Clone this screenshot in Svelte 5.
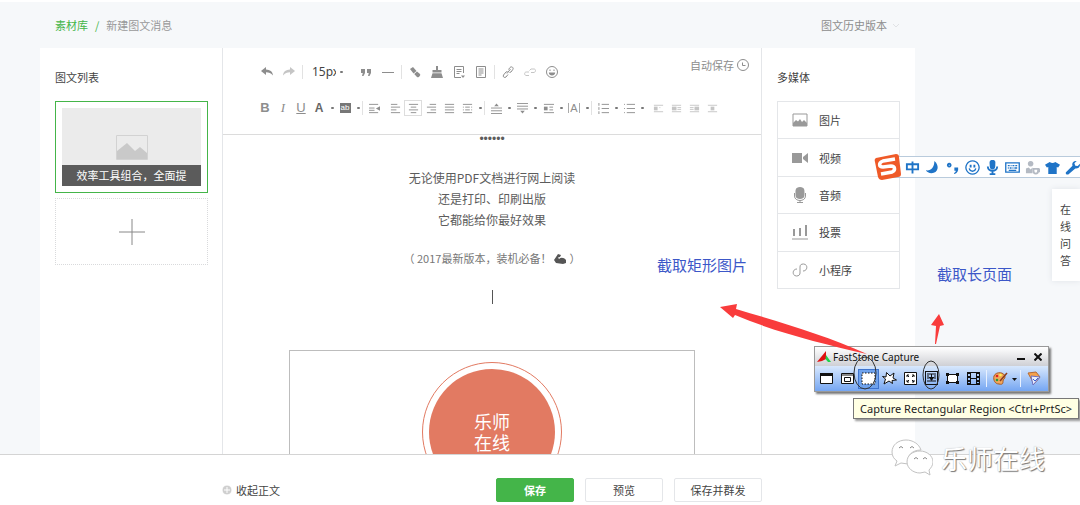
<script lang="ts">
	type Icon = { s?: string; f?: string; faint?: boolean };

	const icons: Record<string, Icon> = {
		undo: { f: 'M0 5 5 1v2.6c4 .2 6.5 2 7 5.900C10 7.200 8 6.300 5 6.300V9z' },
		redo: { f: 'M12 5 7 1v2.600C3 3.800.5 5.600 0 9.500c2-2.300 4-3.200 7-3.200V9z', faint: true },
		quote: { f: 'M1 3h4v4L3.500 10H2l.8-3H1zM7 3h4v4l-1.500 3H8l.8-3H7z' },
		rule: { s: 'M0 6.500h12' },
		eraser: { f: 'M1 3 4 1l3.500 4-3 2.500zM5.200 8 8 5.600l3 2.400c1 1.500-1.500 4-3 3z' },
		brush: { f: 'M5 0h2v4h3.500v2.500h-9V4H5zM1.500 7.300h9L12 12H0z' },
		template: { s: 'M10.500 7V.5h-9v11H8M3.500 3.500h5M3.500 5.500h5M3.500 7.500h3', f: 'M8 9.500h4L10 12z' },
		page: { s: 'M1.500.5h9v11h-9zM3.500 3h5M3.500 5h5M3.500 7h5M3.500 9h3' },
		link: { s: 'M5 7.500 8.500 3M6.500 3.500 8 1.500c1.600-1.600 4 .2 2.800 2L9 6 7.500 6.500M5.500 5.500 4 6 1.500 9c-1 1.700 1 3.300 2.500 2L6 8.500' },
		unlink: { s: 'M5 9.500H2c-2-.5-1.800-3.500.3-3.500H5M7 6.500h3c2-.5 2-3.500 0-3.500H7L5.500 4.500', faint: true },
		smile: { s: 'M6 .5a5.500 5.500 0 1 0 0 11 5.500 5.500 0 1 0 0-11', f: 'M3.500 3.500h1v1.500h-1zM7.500 3.500h1v1.500h-1zM2.800 6.500h6.400c0 4-6.400 4-6.400 0z' },
		indent: { s: 'M0 1.500h10M0 5.500h6M0 10.500h10M0 8h6', f: 'M12 3.500v5L7.500 6z' },
		left: { s: 'M1 1.500h7M1 4.500h10M1 7.500h6M1 10.500h10' },
		center: { s: 'M1 1.500h10M3 4.500h6M1 7.500h10M3 10.500h6' },
		right: { s: 'M4 1.500h7M1 4.500h10M5 7.500h6M1 10.500h10' },
		justify: { s: 'M1 1.500h10M1 4.500h10M1 7.500h10M1 10.500h10' },
		margins: { s: 'M1 1.500h10M3.500 4.500h5M3.500 7.500h5M1 10.500h10M1.500 4v1M1.500 7v1M10.500 4v1M10.500 7v1' },
		spaceTop: { s: 'M0 5.500h12M0 8.500h12M0 11.500h12', f: 'M3.500 3.500 6 .5l2.500 3z' },
		spaceBottom: { s: 'M0 .5h12M0 3.500h12M0 6.500h12', f: 'M3.500 8.500 6 11.500l2.500-3z' },
		lineHeight: { s: 'M1 1.500h11M7 4.500h4M7 7.500h4M1 10.500h11', f: 'M1 4h4v4H1z' },
		ordered: { s: 'M4 1.500h8M4 6h8M4 10.500h8M1 0v3M1 4.500v3M1 9v3' },
		bullets: { s: 'M3 1.500h9M3 6h9M3 10.500h9M0 1.500h1M0 6h1M0 10.500h1' },
		imgNone: { s: 'M1 2.500h10M7 5h1M1 9.500h10', f: 'M1 4h4v4H1z', faint: true },
		imgLeft: { s: 'M1 2.500h10M7 5h4M7 7h4M1 9.500h10', f: 'M1 4h5v4H1z', faint: true },
		imgRight: { s: 'M1 2.500h10M1 5h4M1 7h4M1 9.500h10', f: 'M6 4h5v4H6z', faint: true },
		imgCenter: { s: 'M1 2.500h10M1 9.500h10', f: 'M4 4h4v4H4z', faint: true },
		clock: { s: 'M6 .5a5.500 5.500 0 1 0 0 11 5.500 5.500 0 1 0 0-11M5.500 3.500V6.500h3' }
	};

	const topTools = ['undo', 'redo', '|', 'size', 'quote', 'rule', '|', 'eraser', 'brush', 'template', 'page', '|', 'link', 'unlink', 'smile'];
	const bottomTools = [
		'B', 'I', 'U', 'A', 'v', 'ab', 'v', '|', 'indent', ' ', 'left', 'center', 'right', 'justify', 'margins', 'v', '|',
		'spaceTop', 'v', 'spaceBottom', 'v', 'lineHeight', 'v', '[A]', 'v', '|', 'ordered', 'v', 'bullets', 'v', ' ',
		'imgNone', 'imgLeft', 'imgRight', 'imgCenter'
	];

	const media: { name: string; s?: string; f: string }[] = [
		{ name: '图片', s: 'M1 2h14v12H1z', f: 'M1 14V11l3-3 2 1.500L8 7l2 3 2-2 3 3v3z' },
		{ name: '视频', f: 'M0 3h10v10H0zM11 7l5-4v10l-5-4z' },
		{ name: '音频', s: 'M2.500 6v3c0 6 11 6 11 0V6M8 13.500V16M5 15.500h6', f: 'M8 0c5 0 4.500 4 4.500 6S13 12 8 12 3.500 8 3.500 6 3 0 8 0z' },
		{ name: '投票', s: 'M0 15h16', f: 'M1 5h2v7H1zM7 4h2v8H7zM13 1h2v11h-2z' },
		{ name: '小程序', s: 'M5 7C0 7 0 14 4.500 14 7 14 8 12.500 8 11V5c0-2 1-3 3.500-3 4.500 0 4.500 7-.5 7', f: '' }
	];

	const ime: { label: string; s?: string; f?: string; dim?: boolean }[] = [
		{ label: '中文', s: 'M2 4.500h12v5.500H2zM8 1.500v13' },
		{ label: '半角', f: 'M10 1c6 5 4 13-3 13-3 0-5-1-6-3 5 1 9-3 9-10z' },
		{ label: '标点', s: 'M4.500 4a1.500 1.500 0 1 0 .01 0', f: 'M10 8h4c.5 4-1 6-4 7l-.5-1c1.500-.8 2-1.500 2-2.500H10z' },
		{ label: '表情', s: 'M8 1a7 7 0 1 0 .01 0M4.500 9c1 4 6 4 7 0', f: 'M5 5h2v3H5zM9 5h2v3H9z' },
		{ label: '语音', s: 'M3 7c0 6 10 6 10 0M8 11v4', f: 'M8 0c4 0 3 3 3 5s0 5-3 5-3-3-3-5-1-5 3-5zM5 14h6v2H5z' },
		{ label: '键盘', s: 'M.8 3h14.400v10H.8zM3 6h2M6 6h1M8 6h2M11 6h2M3 8.500h1M5 8.500h2M8 8.500h1M10 8.500h3M4 11h8' },
		{ label: '账户', s: 'M9 9.500h5v2c0 4-5 4-5 0zM14 10h1.500v2H14', f: 'M6 1a3 3 0 1 1-.01 0zM1 9l3-1 2 2 2-2v6H1z', dim: true },
		{ label: '皮肤', f: 'M5 2c2 1.500 4 1.500 6 0l5 3-2 3-1.500-.5V15h-9V7.500L2 8 0 5z' },
		{ label: '工具', f: 'M1 13 8 6c-1-3 1-5.500 4.500-5L10 3.500 11 6l2.500.5L16 4c.5 3-2 5.500-5 5l-7.500 6.500C1.500 16 .3 14.500 1 13z' }
	];

	const shots: { label: string; s: string; f?: string; on?: boolean }[] = [
		{ label: 'Capture Active Window', s: 'M1.500 2.500h12v10h-12z', f: 'M1 2h13v3H1z' },
		{ label: 'Capture Window/Object', s: 'M1.500 2.500h12v10h-12zM1.500 4h12M4.500 6.500h6v4h-6z' },
		{ label: 'Capture Rectangular Region', s: '', on: true },
		{ label: 'Capture Freehand Region', s: 'M4.500 1.500 8 5l4-3-1 5 3.500 2-4.500.5.5 3L7 10l-5 3 1.500-5L.500 5.500 4 6z' },
		{ label: 'Capture Full Screen', s: 'M1.500 1.500h12v12h-12zM4 4l2 2M11 4 9 6M4 11l2-2M11 11 9 9M6 4H4v2M9 4h2v2M6 11H4V9M9 11h2V9' },
		{ label: 'Capture Scrolling Window', s: 'M1.500 1v12M13.500 1v12M1 .5h13M3 3h9M3 5h2M10 5h2M3 7h2M10 7h2M3 10h9M1 13.500h13M7.500 3v5', f: 'M4.500 6h6l-3 4z' },
		{ label: 'Capture Fixed-Size Region', s: 'M2.500 3.500h10v8h-10z', f: 'M1 2h3v3H1zM11 2h3v3h-3zM1 10h3v3H1zM11 10h3v3h-3z' },
		{ label: 'Screen Recorder', s: 'M4.500 1v13M10.500 1v13M4 7.500h7', f: 'M1 1h3v2H2v2h2v2H2v2h2v2H2v1h2v2H1zM14 1h-3v2h2v2h-2v2h2v2h-2v2h2v1h-2v2h3zM4 2h7V1H4zM4 14h7v-1H4z' }
	];
</script>

{#snippet glyph(name: string)}
	<svg class="glyph" class:faint={icons[name].faint} viewBox="0 0 12 12" aria-hidden="true">
		{#if icons[name].s}<path class="line" d={icons[name].s} />{/if}
		{#if icons[name].f}<path class="solid" d={icons[name].f} />{/if}
	</svg>
{/snippet}

<div class="page">
	<div class="workspace">
		<header>
			<nav><a href="#library">素材库</a><span class="slash">/</span><span>新建图文消息</span></nav>
			<button class="history">图文历史版本 <svg viewBox="0 0 8 8" aria-hidden="true"><path d="M1 3l3 3 3-3" /></svg></button>
		</header>

		<div class="columns">
			<aside class="articles">
				<h2>图文列表</h2>
				<button class="cover">
					<span class="thumb">
						<svg viewBox="0 0 32 25" aria-hidden="true">
							<path d="M.5.5h31v24H.5z" fill="none" stroke="#d2d2d2" />
							<path d="M1 24v-8L11 8l8 8 5-4 7 6v6z" fill="#c9c9c9" />
						</svg>
					</span>
					<span class="caption">效率工具组合，全面提</span>
				</button>
				<button class="add" aria-label="添加图文">
					<svg viewBox="0 0 26 26" aria-hidden="true"><path d="M13 0v26M0 13h26" /></svg>
				</button>
			</aside>

			<main>
				<div class="toolbar">
					<div class="tools">
						{#each topTools as t}
							{#if t === '|'}
								<i class="sep wide"></i>
							{:else if t === 'size'}
								<span class="size">
									<select aria-label="字号"><option>15px</option></select>
									<i class="dot"></i>
								</span>
							{:else}
								<button class="tool wide" aria-label={t}>{@render glyph(t)}</button>
							{/if}
						{/each}
					</div>
					<div class="tools second">
						{#each bottomTools as t}
							{#if t === '|'}
								<i class="sep"></i>
							{:else if t === ' '}
								<i class="gap"></i>
							{:else if t === 'v'}
								<button class="more" aria-label="更多"><i class="dot"></i></button>
							{:else if icons[t]}
								<button class="tool" class:active={t === 'center'} aria-label={t}>{@render glyph(t)}</button>
							{:else if t === 'ab'}
								<button class="tool"><span class="ab">ab</span></button>
							{:else if t === '[A]'}
								<button class="tool"><span class="spacing">A</span></button>
							{:else}
								<button class="tool letter {t}">{t}</button>
							{/if}
						{/each}
					</div>
					<span class="autosave">自动保存 {@render glyph('clock')}</span>
				</div>

				<article>
					<p class="dots">••••••</p>
					<p>无论使用PDF文档进行网上阅读</p>
					<p>还是打印、印刷出版</p>
					<p>它都能给你最好效果</p>
					<p class="note">
						（ 2017最新版本，装机必备！<svg viewBox="0 0 12 10" aria-hidden="true"><path d="M0 6 4 0l3 1-1 2-2 .5 1 1.500c2-2 5-1.500 7 1v3L9 10 2 9z" /></svg> ）
					</p>
					<div class="cursor"></div>
					<div class="frame">
						<div class="ring"><div class="disc"><span>乐师</span><span>在线</span></div></div>
					</div>
				</article>
			</main>

			<aside class="media">
				<h2>多媒体</h2>
				<ul>
					{#each media as m}
						<li>
							<button>
								<svg viewBox="0 0 16 16" aria-hidden="true">
									{#if m.s}<path class="line" d={m.s} />{/if}
									<path class="solid" d={m.f} />
								</svg>
								{m.name}
							</button>
						</li>
					{/each}
				</ul>
			</aside>
		</div>
	</div>

	<footer>
		<button class="fold">
			<svg viewBox="0 0 10 10" aria-hidden="true"><circle cx="5" cy="5" r="5" /><path d="M5 2v6M2 5h6" /></svg>
			收起正文
		</button>
		<div class="actions">
			<button class="primary">保存</button>
			<button>预览</button>
			<button class="long">保存并群发</button>
		</div>
	</footer>

	<div class="ime">
		<svg class="sogou" viewBox="0 0 28 28" aria-label="S">
			<path d="M2 5 22 1q3 0 3 3l2 17q0 3-3 3L8 27q-3 0-4-3L1 9q-1-3 1-4z" fill="#ef5a28" />
			<path d="M21 6 9 8c-5 2-4 6 0 6l8-1c4 0 5 4 1 6L7 21" fill="none" stroke="#fff" stroke-width="3.500" />
		</svg>
		{#each ime as k}
			<button class:dim={k.dim} aria-label={k.label}>
				<svg viewBox="0 0 16 16" aria-hidden="true">
					{#if k.s}<path class="line" d={k.s} />{/if}
					{#if k.f}<path class="solid" d={k.f} />{/if}
				</svg>
			</button>
		{/each}
	</div>

	<a class="ask" href="#ask">在线问答</a>

	<span class="remark rect">截取矩形图片</span>
	<span class="remark scroll">截取长页面</span>

	<section class="capture">
		<div class="titlebar">
			<svg viewBox="0 0 14 12" aria-hidden="true"><path d="M0 11 9 0v8L5 10z" fill="#e01010" /><path d="M9 4l5 7h-3L8.500 8z" fill="#1fd04a" /></svg>
			<span>FastStone Capture</span>
			<button aria-label="Minimize"><svg viewBox="0 0 8 8"><path d="M0 6h8" /></svg></button>
			<button aria-label="Close"><svg viewBox="0 0 8 8"><path d="M.5.5l7 7M7.500.5l-7 7" /></svg></button>
		</div>
		<div class="shots">
			{#each shots as c}
				<button class:on={c.on} aria-label={c.label}>
					<svg viewBox="0 0 15 15" aria-hidden="true">
						{#if c.on}
							<rect x="1" y="2" width="13" height="11" fill="#fff" stroke="#111" stroke-dasharray="1.500 1.500" />
						{:else}
							<path class="line" d={c.s} />
							{#if c.f}<path class="solid" d={c.f} />{/if}
						{/if}
					</svg>
				</button>
			{/each}
			<i></i>
			<button aria-label="Open in Editor">
				<svg viewBox="0 0 15 15" aria-hidden="true">
					<path d="M1 5c2-5 11-4 11 1 0 2-2 2-2 4s0 4-4 3C2 13 0 9 1 5z" fill="#f2a75c" stroke="#a75a22" />
					<circle cx="4" cy="5" r="1.300" fill="#d22" /><circle cx="7.500" cy="4" r="1.300" fill="#fff04c" /><circle cx="4" cy="9" r="1.300" fill="#2a9c3a" />
					<path d="M14 2 7 10" stroke="#8a3c1c" stroke-width="1.500" />
				</svg>
			</button>
			<button class="drop" aria-label="Output"><svg viewBox="0 0 6 6"><path class="solid" d="M0 2h5L2.500 5z" /></svg></button>
			<i></i>
			<button aria-label="Settings">
				<svg viewBox="0 0 15 15" aria-hidden="true">
					<path d="M1 2 9 1l4 5-6 7z" fill="#f5a14c" stroke="#b56b35" />
					<path d="M4 5l9 1-7 8z" fill="#e9efff" stroke="#6c6fc0" /><path d="M6 8l2 2 3-3" fill="none" stroke="#3d62cf" />
				</svg>
			</button>
		</div>
	</section>
	<div class="tooltip" role="tooltip">Capture Rectangular Region &lt;Ctrl+PrtSc&gt;</div>

	<svg class="marks" viewBox="0 0 360 110" aria-hidden="true">
		<path d="M0 16 17 13 16 18C60 31 105 44 147 63 100 52 55 41 15 24L13 27z" fill="#f93c3c" />
		<path d="M219 23l5 11-4 1-4 18h-1l1-18-5-1z" fill="#f93c3c" />
		<ellipse cx="145" cy="82" rx="11" ry="16" /><ellipse cx="211" cy="84" rx="8" ry="14" />
	</svg>

	<div class="watermark">
		<svg viewBox="0 0 42 38" aria-hidden="true">
			<path d="M15 1C7 1 1 6 1 13c0 4 2 7 5 9l-2 5 6-3 7 1c-2-8 4-14 13-14C28 5 22 1 15 1z" />
			<path d="M29 12c-7 0-13 4-13 11 0 6 6 11 13 11l5-1 5 3-1-5c2-2 4-5 4-8 0-6-6-11-13-11z" />
			<path class="eyes" d="M8 9q2-3 4 0M19 9q2-3 4 0M23 20q2-3 4 0M32 20q2-3 4 0" />
		</svg>
		<span>乐师在线</span>
	</div>
</div>

<style>
	:global(body) {
		margin: 0;
	}

	.page {
		position: relative;
		display: flex;
		flex-direction: column;
		height: 100vh;
		overflow: hidden;
		box-sizing: border-box;
		border-top: 2px solid #fff;
		background: #f6f8fa;
		color: #444;
		font: 11px/16px 'Noto Sans CJK SC', sans-serif;
	}

	.page :global(*) {
		box-sizing: border-box;
	}

	button,
	select {
		padding: 0;
		border: 0;
		background: none;
		color: inherit;
		font: inherit;
	}

	svg {
		display: block;
		flex: none;
	}

	a {
		text-decoration: none;
	}

	h2,
	p {
		margin: 0;
		font-weight: 400;
	}

	h2 {
		margin-bottom: 16px;
		font-size: 11px;
	}

	.workspace {
		display: flex;
		flex: 1;
		flex-direction: column;
		min-height: 0;
		margin: 0 165px 0 40px;
		overflow: hidden;
	}

	header {
		display: flex;
		align-items: center;
		justify-content: space-between;
		flex: none;
		height: 46px;
		padding: 0 15px;
		color: #999;
	}

	header a {
		color: #44b549;
	}

	.slash {
		margin: 0 7px;
		color: #44b549;
	}

	.history {
		display: flex;
		align-items: center;
		gap: 5px;
		color: #8d8d8d;
	}

	.history svg {
		width: 8px;
		fill: none;
		stroke: #e0e2e5;
	}

	.columns {
		display: grid;
		grid-template-columns: 182px 1fr 153px;
		flex: 1;
		min-height: 0;
		background: #fff;
	}

	aside {
		padding: 21px 15px 0;
	}

	.articles {
		padding-right: 14px;
	}

	.cover {
		display: flex;
		flex-direction: column;
		width: 100%;
		height: 92px;
		padding: 6px;
		border: 1px solid #44b549;
	}

	.thumb {
		display: flex;
		flex: 1;
		align-items: flex-end;
		justify-content: center;
		width: 100%;
		padding-bottom: 5px;
		background: #ebebeb;
	}

	.thumb svg {
		width: 32px;
	}

	.caption {
		width: 100%;
		height: 21px;
		background: #5b5b5b;
		color: #fff;
		line-height: 20px;
	}

	.add {
		display: flex;
		align-items: center;
		justify-content: center;
		width: 100%;
		height: 67px;
		margin-top: 5px;
		border: 1px dotted #d9dadc;
	}

	.add svg {
		width: 26px;
		stroke: #888;
	}

	main {
		display: flex;
		flex-direction: column;
		min-width: 0;
		overflow: hidden;
		border: solid #e4e6e9;
		border-width: 0 1px;
	}

	.toolbar {
		position: relative;
		flex: none;
		height: 87px;
		padding: 13px 0 0 33px;
		border-bottom: 1px solid #dcdcdc;
		color: #8d8d8d;
	}

	.tools {
		display: flex;
		align-items: center;
		height: 22px;
	}

	.second {
		margin-top: 14px;
	}

	.tool {
		display: flex;
		align-items: center;
		justify-content: center;
		width: 18px;
		height: 16px;
	}

	.tool.wide {
		width: 22px;
	}

	.tool.active {
		border: 1px solid #ddd;
	}

	.glyph {
		width: 12px;
		height: 12px;
	}

	.second .glyph {
		width: 11px;
		height: 11px;
	}

	.glyph.faint {
		opacity: 0.5;
	}

	.line {
		fill: none;
		stroke: currentColor;
	}

	.solid {
		fill: currentColor;
	}

	.sep {
		width: 3px;
		height: 14px;
		border-left: 1px solid #e2e2e2;
	}

	.sep.wide {
		width: 3px;
		margin-left: 2px;
	}

	.gap {
		width: 3px;
	}

	.size {
		display: flex;
		align-items: center;
		width: 50px;
		padding-left: 7px;
	}

	.size select {
		width: 24px;
		margin-right: 4px;
		overflow: hidden;
		appearance: none;
		color: #444;
		font: 12px/16px 'Noto Sans', sans-serif;
		text-overflow: clip;
	}

	.more {
		display: flex;
		align-items: center;
		justify-content: center;
		width: 8px;
		height: 16px;
	}

	.dot {
		width: 3px;
		height: 2px;
		border-radius: 1px;
		background: #777;
	}

	.letter {
		font: 13px/16px 'Liberation Sans', sans-serif;
	}

	.B,
	.A {
		font-weight: 700;
	}

	.A {
		color: #666;
		font-size: 12px;
	}

	.I {
		font-family: 'Liberation Serif', serif;
		font-style: italic;
	}

	.U {
		text-decoration: underline;
	}

	.ab {
		width: 11px;
		background: #777;
		color: #fff;
		font: 8px/10px 'Liberation Sans', sans-serif;
	}

	.spacing {
		width: 12px;
		border: solid #aaa;
		border-width: 0 1px;
		font: 11px/10px 'Liberation Sans', sans-serif;
	}

	.autosave {
		position: absolute;
		top: 9px;
		right: 12px;
		display: flex;
		align-items: center;
		gap: 3px;
	}

	article {
		display: flex;
		flex: 1;
		flex-direction: column;
		min-height: 0;
		padding: 0 66px;
		color: #5c5c5c;
		font-size: 12px;
		line-height: 21px;
		text-align: center;
	}

	article p {
		flex: none;
	}

	.dots {
		height: 32px;
		line-height: 9px;
		font-family: 'Liberation Sans', sans-serif;
	}

	.note {
		display: flex;
		align-items: center;
		justify-content: center;
		gap: 3px;
		margin-top: 18px;
		color: #777;
		font-size: 11px;
	}

	.note svg {
		width: 12px;
		fill: #555;
	}

	.cursor {
		flex: none;
		align-self: center;
		width: 1px;
		height: 14px;
		margin: 21px 0 46px;
		background: #555;
	}

	.frame {
		flex: none;
		height: 180px;
		padding-top: 11px;
		border: 1px solid #bdbdbd;
	}

	.ring {
		width: 140px;
		height: 140px;
		margin: 0 auto;
		padding: 6px;
		border: 1px solid #e27a62;
		border-radius: 50%;
	}

	.disc {
		height: 100%;
		padding-top: 42px;
		border-radius: 50%;
		background: #e27a62;
		color: #fff;
		font-size: 18px;
	}

	.disc span {
		display: block;
	}

	.media ul {
		display: flex;
		flex-direction: column;
		height: 188px;
		margin: 0;
		padding: 0;
		border: 1px solid #e4e6e9;
		list-style: none;
	}

	.media li {
		display: flex;
		flex: 1;
	}

	.media li + li {
		border-top: 1px solid #e4e6e9;
	}

	.media button {
		display: flex;
		flex: 1;
		align-items: center;
		gap: 11px;
		padding-left: 14px;
	}

	.media svg {
		width: 16px;
		color: #999;
	}

	footer {
		display: flex;
		flex: none;
		align-items: flex-start;
		justify-content: space-between;
		height: 51px;
		padding: 23px 318px 0 222px;
		border-top: 1px solid #d4d4d4;
		background: #fff;
	}

	.fold {
		display: flex;
		align-items: center;
		gap: 4px;
		height: 24px;
	}

	.fold svg {
		width: 10px;
		fill: #cfcfcf;
		stroke: #fff;
	}

	.actions {
		display: flex;
		gap: 11px;
	}

	.actions button {
		width: 78px;
		height: 24px;
		border: 1px solid #e4e6e9;
		border-radius: 2px;
	}

	.actions .primary {
		border-color: #44b549;
		background: #44b549;
		color: #fff;
		font-weight: 700;
	}

	.actions .long {
		width: 88px;
	}

	.ime {
		position: absolute;
		top: 154px;
		right: -2px;
		display: flex;
		align-items: center;
		height: 22px;
		border: solid #b9cbdc;
		border-width: 1px 0;
		background: #fff;
		color: #1f74c7;
	}

	.ime button {
		display: flex;
		justify-content: center;
		width: 20px;
	}

	.ime button svg {
		width: 15px;
		stroke-width: 2;
	}

	.ime button:nth-of-type(4) svg,
	.ime button:nth-of-type(6) svg {
		stroke-width: 1.4;
	}

	.ime .dim {
		color: #b4bac3;
	}

	.sogou {
		width: 28px;
		margin-left: -12px;
	}

	.ask {
		position: absolute;
		top: 187px;
		right: 0;
		width: 28px;
		padding: 12px 8px;
		background: #fff;
		box-shadow: 0 0 6px #dfe3e8;
		color: #444;
		line-height: 17px;
	}

	.remark {
		position: absolute;
		color: #3c57c8;
		font-size: 15px;
		line-height: 20px;
	}

	.rect {
		top: 253px;
		right: 333px;
	}

	.scroll {
		top: 262px;
		right: 68px;
	}

	.capture {
		position: absolute;
		top: 344px;
		right: 31px;
		width: 235px;
		border: 1px solid #999;
		box-shadow: 2px 2px 2px #777;
		font: 10px/18px 'Noto Sans', sans-serif;
		color: #111;
	}

	.titlebar {
		display: flex;
		align-items: center;
		gap: 9px;
		height: 19px;
		padding: 0 6px 0 2px;
		background: linear-gradient(#fff, #cfd0d5);
	}

	.titlebar span {
		flex: 1;
		margin-left: -7px;
	}

	.titlebar > svg {
		width: 14px;
	}

	.titlebar button svg {
		width: 8px;
		stroke: #111;
		stroke-width: 2;
	}

	.shots {
		display: flex;
		align-items: center;
		height: 25px;
		padding-left: 1px;
		background: linear-gradient(#d8e8fd, #75a6f2);
	}

	.shots button {
		display: flex;
		align-items: center;
		justify-content: center;
		width: 21px;
		height: 20px;
	}

	.shots button svg {
		width: 15px;
	}

	.shots .on {
		border: 1px solid #3f74cd;
		background: #6fa2ec;
	}

	.shots .drop {
		width: 7px;
	}

	.shots .drop svg {
		width: 6px;
	}

	.shots .solid,
	.shots .line {
		color: #111;
	}

	.shots .line {
		fill: #fff;
	}

	.shots i {
		width: 1px;
		height: 17px;
		margin: 0 3px 0 2px;
		background: #e8f1ff;
	}

	.tooltip {
		position: absolute;
		top: 396px;
		right: 1px;
		padding: 0 6px;
		border: 1px solid #777;
		background: #ffffe3;
		box-shadow: 2px 2px 2px #999;
		color: #222;
		font: 11px/19px 'Noto Sans', sans-serif;
		white-space: nowrap;
	}

	.marks {
		position: absolute;
		top: 289px;
		right: 0;
		width: 360px;
		pointer-events: none;
	}

	.marks ellipse {
		fill: none;
		stroke: #333;
	}

	.watermark {
		position: absolute;
		right: 35px;
		bottom: 28px;
		display: flex;
		align-items: center;
		gap: 8px;
		color: #fff;
		font-size: 26px;
		line-height: 38px;
		text-shadow: 1px 1px 1px #777, 0 0 1px #aaa;
	}

	.watermark svg {
		width: 42px;
		fill: #fff;
		stroke: #c2c2c2;
	}

	.watermark .eyes {
		fill: none;
		stroke: #888;
	}
</style>
